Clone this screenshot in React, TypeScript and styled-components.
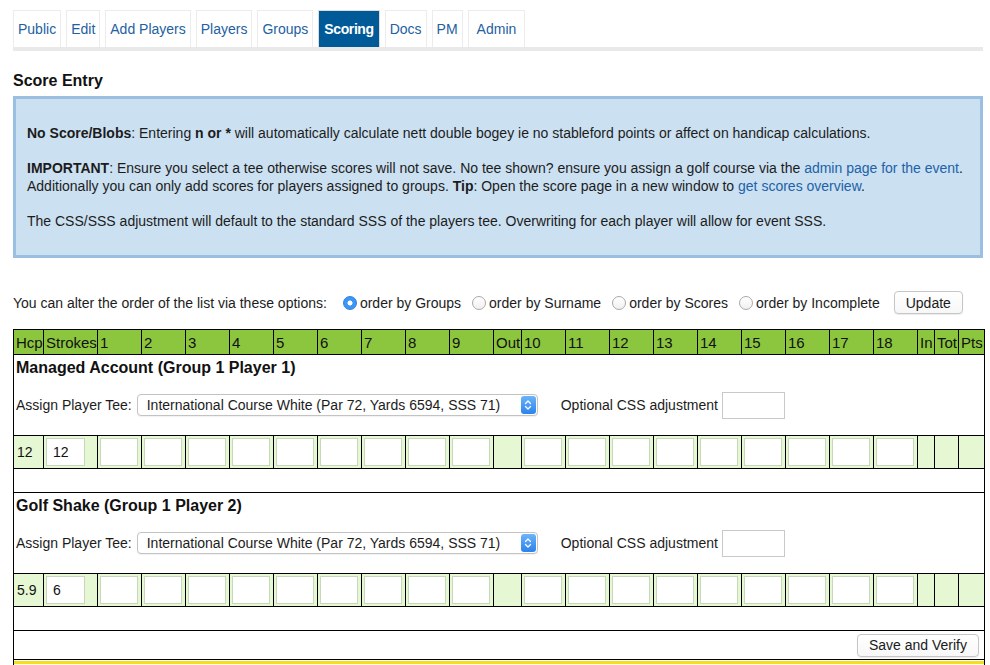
import React from 'react';
import styled, { createGlobalStyle } from 'styled-components';

const GlobalStyle = createGlobalStyle`
  body {
    margin: 0;
    background: #fff;
    color: #1a1a1a;
    font-family: "Liberation Sans", Arial, Helvetica, sans-serif;
  }
`;

const tabs = ['Public', 'Edit', 'Add Players', 'Players', 'Groups', 'Scoring', 'Docs', 'PM', 'Admin'];
const orders = ['Groups', 'Surname', 'Scores', 'Incomplete'];
const frontNine = ['1', '2', '3', '4', '5', '6', '7', '8', '9'];
const backNine = ['10', '11', '12', '13', '14', '15', '16', '17', '18'];
const headers = ['Hcp', 'Strokes', ...frontNine, 'Out', ...backNine, 'In', 'Tot', 'Pts'];
const colWidths = [30, 54, ...frontNine.map(() => 44), 28, ...backNine.map(() => 44), 17, 24, 26];

const players = [
    { name: 'Managed Account (Group 1 Player 1)', hcp: '12', strokes: '12' },
    { name: 'Golf Shake (Group 1 Player 2)', hcp: '5.9', strokes: '6' },
];

const teeName = 'International Course White (Par 72, Yards 6594, SSS 71)';

function App() {
    return (
        <Page>
            <GlobalStyle />
            <TabBar>
                {tabs.map((t) => (
                    <Tab key={t} href="#" $active={t === 'Scoring'}>{t}</Tab>
                ))}
            </TabBar>

            <Title>Score Entry</Title>

            <InfoBox>
                <p>
                    <b>No Score/Blobs</b>: Entering <b>n or *</b> will automatically calculate nett double bogey ie no stableford points or affect on handicap calculations.
                </p>
                <p>
                    <b>IMPORTANT</b>: Ensure you select a tee otherwise scores will not save. No tee shown? ensure you assign a golf course via the <Link href="#">admin page for the event</Link>.
                    <br />
                    Additionally you can only add scores for players assigned to groups. <b>Tip</b>: Open the score page in a new window to <Link href="#">get scores overview</Link>.
                </p>
                <p>
                    The CSS/SSS adjustment will default to the standard SSS of the players tee. Overwriting for each player will allow for event SSS.
                </p>
            </InfoBox>

            <OrderRow>
                <OrderLabel>You can alter the order of the list via these options:</OrderLabel>
                {orders.map((o, i) => (
                    <RadioOption key={o}>
                        <Radio $checked={i === 0} />
                        order by {o}
                    </RadioOption>
                ))}
                <MacButton>Update</MacButton>
            </OrderRow>

            <ScoreTable>
                <colgroup>
                    {colWidths.map((w, i) => (
                        <col key={i} style={{ width: w }} />
                    ))}
                </colgroup>
                <thead>
                    <tr>
                        {headers.map((h) => (
                            <HeadCell key={h}>{h}</HeadCell>
                        ))}
                    </tr>
                </thead>
                <tbody>
                    {players.map((p) => (
                        <React.Fragment key={p.name}>
                            <tr>
                                <InfoCell colSpan={headers.length}>
                                    <PlayerName>{p.name}</PlayerName>
                                    <TeeRow>
                                        <TeeLabel>Assign Player Tee:</TeeLabel>
                                        <SelectWrap>
                                            <SelectText>{teeName}</SelectText>
                                            <Stepper>
                                                <svg width="8" height="12" viewBox="0 0 8 12">
                                                    <path d="M1.5 4.5 L4 2 L6.5 4.5 M1.5 7.5 L4 10 L6.5 7.5" fill="none" stroke="#fff" strokeWidth="1.3" strokeLinecap="round" strokeLinejoin="round" />
                                                </svg>
                                            </Stepper>
                                        </SelectWrap>
                                        <CssLabel>Optional CSS adjustment</CssLabel>
                                        <CssInput />
                                    </TeeRow>
                                </InfoCell>
                            </tr>
                            <tr>
                                <ScoreCell $text>{p.hcp}</ScoreCell>
                                <ScoreCell>
                                    <ScoreInput $wide defaultValue={p.strokes} />
                                </ScoreCell>
                                {frontNine.map((h) => (
                                    <ScoreCell key={h}><ScoreInput /></ScoreCell>
                                ))}
                                <ScoreCell />
                                {backNine.map((h) => (
                                    <ScoreCell key={h}><ScoreInput /></ScoreCell>
                                ))}
                                <ScoreCell />
                                <ScoreCell />
                                <ScoreCell />
                            </tr>
                            <tr>
                                <SpacerCell colSpan={headers.length} />
                            </tr>
                        </React.Fragment>
                    ))}
                    <tr>
                        <ActionCell colSpan={headers.length}>
                            <MacButton>Save and Verify</MacButton>
                        </ActionCell>
                    </tr>
                    <tr>
                        <NoticeCell colSpan={headers.length}>
                            <NoticeBar />
                        </NoticeCell>
                    </tr>
                </tbody>
            </ScoreTable>
        </Page>
    );
}

export default App;

const Page = styled.div`
    width: 970px;
    padding: 0 7px 0 13px;
`;

const TabBar = styled.nav`
    display: flex;
    gap: 5px;
    padding-top: 10px;
    border-bottom: 4px solid #e9e9e9;
`;

const Tab = styled.a<{ $active?: boolean }>`
    display: flex;
    align-items: center;
    height: 37px;
    padding: 0 ${(p) => (p.$active ? '5px' : '4px')};
    border: 1px solid ${(p) => (p.$active ? '#dcdcdc' : '#ececec')};
    border-bottom: none;
    box-sizing: border-box;
    background: ${(p) => (p.$active ? '#005a97' : '#fff')};
    color: ${(p) => (p.$active ? '#fff' : '#245f9f')};
    font-size: 14px;
    font-weight: ${(p) => (p.$active ? 'bold' : 'normal')};
    letter-spacing: ${(p) => (p.$active ? '-0.4px' : '0')};
    text-decoration: none;

    &:last-child {
        padding: 0 8px;
    }
`;

const Title = styled.h2`
    margin: 20px 0 5px;
    font-size: 16px;
    line-height: 20px;
    font-weight: bold;
    color: #111;
`;

const InfoBox = styled.div`
    border: 3px solid #9bbfe1;
    background: #cbe0f1;
    padding: 25px 11px 25px;
    font-size: 14px;
    line-height: 18px;
    color: #1c1c1c;

    p {
        margin: 0 0 17px;
    }

    p:last-child {
        margin-bottom: 0;
    }
`;

const Link = styled.a`
    color: #2162a8;
    text-decoration: none;
`;

const OrderRow = styled.div`
    display: flex;
    align-items: center;
    height: 23px;
    margin-top: 33px;
    font-size: 14px;
    color: #1c1c1c;
`;

const OrderLabel = styled.span`
    margin-right: 16px;
`;

const RadioOption = styled.label`
    display: flex;
    align-items: center;
    gap: 3px;
    margin-right: 11px;
`;

const Radio = styled.span<{ $checked?: boolean }>`
    width: 14px;
    height: 14px;
    box-sizing: border-box;
    border-radius: 50%;
    border: 1px solid ${(p) => (p.$checked ? '#2d7fe0' : '#a9a9a9')};
    background: ${(p) =>
        p.$checked
            ? 'radial-gradient(circle, #fff 0 2.2px, #3d95f5 2.8px)'
            : 'linear-gradient(#ffffff, #f0f0f0)'};
`;

const MacButton = styled.button`
    height: 23px;
    padding: 0 11px;
    margin-left: 3px;
    border: 1px solid #c6c6c6;
    border-radius: 4px;
    background: linear-gradient(#ffffff, #f7f7f7);
    box-shadow: 0 1px 1px rgba(0, 0, 0, 0.08);
    font-family: "Liberation Sans", Arial, Helvetica, sans-serif;
    font-size: 14px;
    color: #1a1a1a;
`;

const ScoreTable = styled.table`
    margin-top: 15px;
    width: 970px;
    table-layout: fixed;
    border-collapse: collapse;
    border: 1px solid #000;
`;

const HeadCell = styled.th`
    height: 24px;
    padding: 0 1px 0 2px;
    background: #8cc63f;
    border: 1px solid #000;
    font-size: 15px;
    font-weight: normal;
    text-align: left;
    color: #111;
    white-space: nowrap;
    overflow: hidden;
`;

const InfoCell = styled.td`
    padding: 4px 2px 16px;
`;

const PlayerName = styled.div`
    font-size: 16px;
    line-height: 18px;
    font-weight: bold;
    color: #111;
`;

const TeeRow = styled.div`
    display: flex;
    align-items: center;
    height: 28px;
    margin-top: 14px;
    font-size: 14px;
    color: #1c1c1c;
`;

const TeeLabel = styled.span`
    margin-right: 5px;
`;

const SelectWrap = styled.div`
    position: relative;
    display: flex;
    align-items: center;
    width: 401px;
    height: 22px;
    box-sizing: border-box;
    padding-left: 9px;
    border: 1px solid #c3c3c3;
    border-radius: 4px;
    background: #fff;
    box-shadow: 0 1px 1px rgba(0, 0, 0, 0.06);
`;

const SelectText = styled.span`
    white-space: nowrap;
`;

const Stepper = styled.span`
    position: absolute;
    right: 1px;
    top: 1px;
    bottom: 1px;
    width: 15px;
    display: flex;
    align-items: center;
    justify-content: center;
    border-radius: 3px;
    background: linear-gradient(#6cb3fa, #2a83ec);
`;

const CssLabel = styled.span`
    margin-left: 23px;
    margin-right: 4px;
`;

const CssInput = styled.input`
    width: 63px;
    height: 27px;
    box-sizing: border-box;
    border: 1px solid #c9c9c9;
    background: #fff;
`;

const ScoreCell = styled.td<{ $text?: boolean }>`
    height: 28px;
    padding: ${(p) => (p.$text ? '0 3px' : '2px 2px')};
    background: #e6f7d3;
    border: 1px solid #000;
    font-size: 14px;
    color: #111;
`;

const ScoreInput = styled.input<{ $wide?: boolean }>`
    display: block;
    width: ${(p) => (p.$wide ? '39px' : '38px')};
    height: 28px;
    box-sizing: border-box;
    padding: 0 6px;
    border: 1px solid #c8d6bc;
    background: #fff;
    font-family: "Liberation Sans", Arial, Helvetica, sans-serif;
    font-size: 14px;
    color: #111;
`;

const SpacerCell = styled.td`
    height: 23px;
    padding: 0;
    border-bottom: 1px solid #000;
`;

const ActionCell = styled.td`
    height: 26px;
    padding: 1px 5px 1px 0;
    text-align: right;
    border-bottom: 1px solid #000;
`;

const NoticeCell = styled.td`
    padding: 1px 0 0;
`;

const NoticeBar = styled.div`
    height: 20px;
    border-top: 3px solid #f3df1d;
    background: #fffce3;
`;
